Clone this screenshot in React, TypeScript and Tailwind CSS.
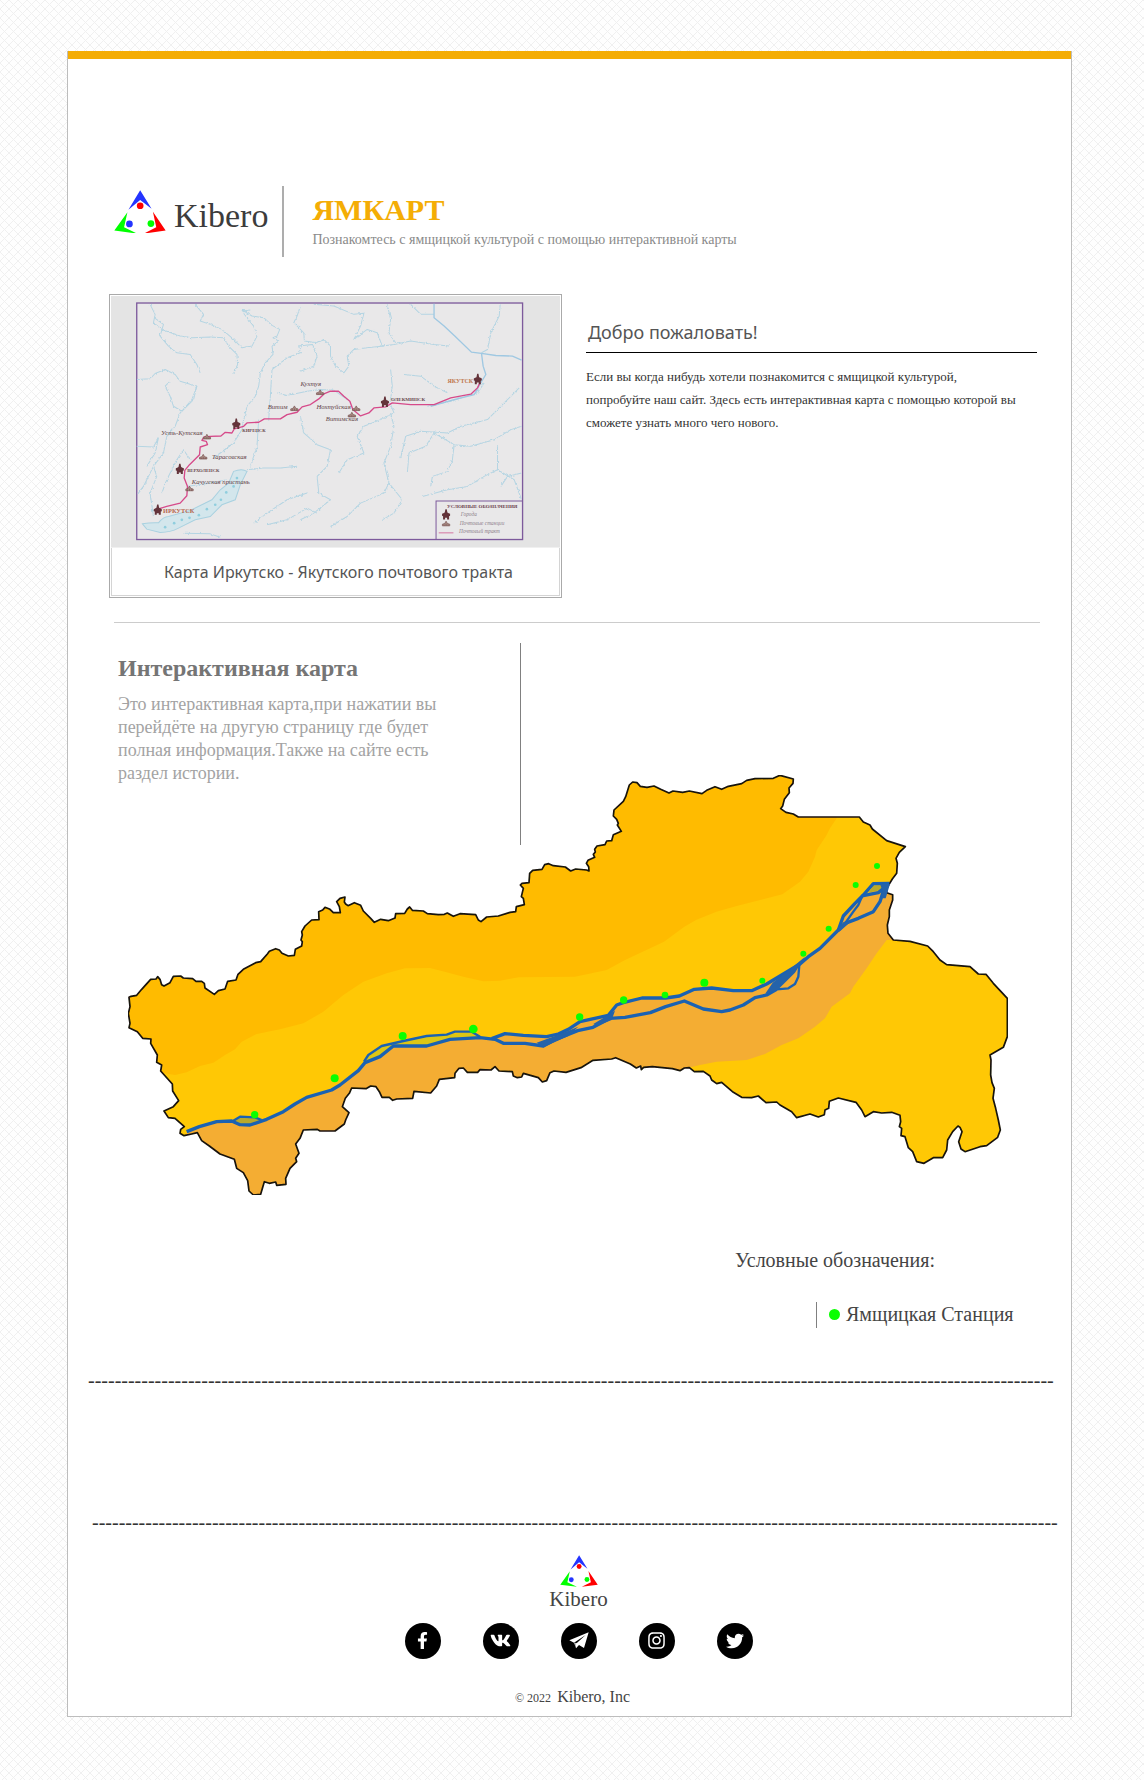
import React from "react";
import { FaFacebookF, FaVk, FaTwitter, FaInstagram } from "react-icons/fa";

const serif = "font-['Liberation_Serif',serif]";
const sans = "font-['Noto_Sans',sans-serif]";

function Logo({ className }: { className: string }) {
  return (
    <svg viewBox="222 481 155 131" className={className} aria-hidden="true">
      <path fill="#2434ff" d="M300 482 334 537 300 511 265 540Z" />
      <path fill="#f00" d="M338 546 376 602 311 611 348 592Z" />
      <path fill="#0f0" d="M262 547 223 602 291 611 252 592Z" />
      <circle cx="300" cy="528" r="10" fill="#f00" />
      <circle cx="268" cy="582" r="10" fill="#2434ff" />
      <circle cx="332" cy="581" r="10" fill="#0f0" />
    </svg>
  );
}

const rivers = [
  "M150 55 165 85 160 110 185 130 240 150 275 155 330 153 370 155 385 180 410 205 412 235 400 262",
  "M285 55 310 85 300 105 330 115 365 130 400 160 425 185 455 180 470 150 460 120 440 95 425 75 450 72",
  "M425 72 455 90 490 95 515 118 538 130 530 150 518 155 535 165 515 180 518 205 495 230 480 260 475 300 465 330 440 360 430 400 425 430",
  "M162 95 190 115 180 150 205 180 230 200 270 205 290 235 300 260",
  "M110 280 150 278 165 262 195 250 225 265 240 285 290 300 275 340 245 375 220 360 210 330 195 300 210 285",
  "M290 300 280 340 240 380 225 420 200 450 190 500 160 540 130 600 115 620",
  "M110 480 160 482 175 455 165 500 140 540",
  "M600 60 590 90 580 110 610 140 612 165 650 170 670 160 690 180 690 210 705 240 730 260 745 240 740 210 760 190 800 185 850 180",
  "M640 55 700 60 760 85 790 82 780 120 760 160 800 130 830 140 845 180 880 175 930 165 1000 175 1045 180",
  "M860 55 870 100 865 140 885 170",
  "M930 55 960 85 1000 85",
  "M1198 55 1195 90 1170 140 1160 190 1142 200",
  "M505 400 510 330 515 250 560 215 600 200 595 180 635 175 650 210 640 240 600 255",
  "M530 320 560 328 620 315 660 310 700 312 740 340",
  "M600 390 610 440 650 475 690 490 680 540 650 570 655 620 690 640 640 680 600 700",
  "M440 550 490 545 540 545 590 540",
  "M475 400 470 480 450 540",
  "M870 250 875 300 868 350 880 380 840 400 790 420 770 450 790 500 740 520 715 560",
  "M870 380 880 420 870 480 850 530 865 590 905 640 880 680 845 700",
  "M865 590 850 620 780 650 740 690 690 720",
  "M910 265 960 270 1000 300 1040 320",
  "M980 360 1050 345 1130 320 1150 290",
  "M900 515 915 450 960 435 1040 440 1080 420 1160 400 1210 350 1255 305",
  "M1000 440 975 480 925 500 920 560",
  "M1000 440 1060 475 1110 480 1180 460 1230 430 1262 420",
  "M1060 475 1055 520 1040 555 995 570 990 600",
  "M965 630 1040 610 1100 600 1150 570 1190 550 1190 480",
  "M1190 550 1240 580 1262 640",
  "M1262 560 1220 570 1200 600",
  "M460 710 500 680 560 640 620 620",
  "M500 715 560 700 620 665 650 680",
  "M160 690 150 620 170 570 160 540",
  "M270 520 250 490 230 520 200 580 185 620",
  "M340 515 400 470 425 430",
  "M260 600 330 590 380 580",
  "M250 740 330 742 360 752",
];

const towns: [number, number][] = [
  [173, 672], [239, 550], [408, 415], [853, 349], [1131, 281], [1036, 686],
];
const stations: [number, number][] = [
  [268, 607], [309, 512], [320, 452], [582, 367], [659, 319], [767, 367], [754, 386], [1036, 712],
];

function PostalRouteMap() {
  return (
    <svg viewBox="33 30 1344 753" className="block w-full" role="img" aria-label="Карта Иркутско - Якутского почтового тракта">
      <filter id="meander" x="0" y="0" width="100%" height="100%">
        <feTurbulence type="fractalNoise" baseFrequency="0.12" numOctaves="2" seed="4" />
        <feDisplacementMap in="SourceGraphic" scale="9" xChannelSelector="R" yChannelSelector="G" />
      </filter>
      <rect x="33" y="30" width="1344" height="753" fill="#e4e4e4" />
      <rect x="110" y="51" width="1155" height="708" fill="#e9e8e9" stroke="#7d5a9c" strokeWidth="4" />
      <g fill="none" stroke="#b5d5e3" strokeWidth="3" strokeLinejoin="round" filter="url(#meander)">
        {rivers.map((d) => (
          <path key={d} d={d} />
        ))}
      </g>
      <path d="M127 712Q150 708 175 709 190 690 205 690L270 672 335 640 360 610 385 590 400 555Q425 545 440 555L420 595 405 640 365 655 330 690 285 700 235 725Q210 738 180 738L140 728Z" fill="#d3e6ec" stroke="#a9d1e0" strokeWidth="3" />
      <g fill="#90cede">
        {[[195, 722], [222, 710], [245, 700], [268, 694], [296, 686], [320, 668], [345, 655], [362, 640], [378, 618], [400, 600], [410, 575]].map(([x, y]) => (
          <circle key={x} cx={x} cy={y} r="4" />
        ))}
      </g>
      <path d="M1000 53V95L1030 120 1062 150 1112 198 1142 202 1185 208 1235 210 1262 222M1142 202 1147 240 1155 265 1137 295 1120 325 1060 340 990 360" fill="none" stroke="#9fc8e2" strokeWidth="4" />
      <path
        d="M173 668 200 660 240 650 260 628 262 600 252 575 254 552 268 535 298 505 300 482 322 475 318 465 305 462 312 452 330 450 362 449 375 438 395 440 402 428 430 420 440 410 475 408 492 398 540 398 560 385 590 378 605 362 630 355 655 338 672 322 690 315 714 315 730 330 748 345 757 370 780 389 805 380 820 365 855 362 875 350 930 355 1000 355 1050 335 1110 324 1130 305 1137 290"
        fill="none" stroke="#d64a8a" strokeWidth="4" strokeLinejoin="round"
      />
      <g fill="#64333a">
        {towns.map(([x, y]) => (
          <path key={`${x}-${y}`} transform={`translate(${x} ${y})`} d="M-2-18H2L4-8 8-6 12-4V2L9 3V13H3V8H-3V13H-9V3L-12 2V-4L-8-6-4-8Z" />
        ))}
      </g>
      <g fill="#a98c85" stroke="#76504e" strokeWidth="2">
        {stations.map(([x, y]) => (
          <path key={`${x}-${y}`} transform={`translate(${x} ${y})`} d="M-11 6V1L-4-1 0-8 4-1 11 1V6ZM-6 2V6M0 0V6M6 2V6" />
        ))}
      </g>
      <g className="font-['Liberation_Serif',serif] font-bold" fontSize="17" fill="#6a4a50">
        <text x="189" y="681" fill="#b5654c" fontSize="19">ИРКУТСК</text>
        <text x="1040" y="290" fill="#c0764c" fontSize="18">ЯКУТСК</text>
        <text x="261" y="558" fontSize="14">ВЕРХОЛЕНСК</text>
        <text x="426" y="438" fontSize="14">КИРЕНСК</text>
        <text x="871" y="344" fontSize="15">ОЛЕКМИНСК</text>
        <text x="1039" y="666" fontSize="15" fill="#6a3f4c">УСЛОВНЫЕ ОБОЗНАЧЕНИЯ</text>
      </g>
      <g className="font-['Liberation_Serif',serif] italic" fontSize="20" fill="#5f4248">
        <text x="275" y="594">Качугская пристань</text>
        <text x="335" y="518">Тарасовская</text>
        <text x="183" y="446">Усть-Кутская</text>
        <text x="502" y="368">Витим</text>
        <text x="600" y="300">Кухтуя</text>
        <text x="648" y="369">Нохтуйская</text>
        <text x="676" y="404">Витимская</text>
      </g>
      <g className="font-['Liberation_Serif',serif] italic" fontSize="16" fill="#8d7f8b">
        <text x="1080" y="689">Города</text>
        <text x="1077" y="717">Почтовые станции</text>
        <text x="1075" y="739">Почтовый тракт</text>
      </g>
      <path d="M1006 759V644H1265" fill="none" stroke="#7d5a9c" strokeWidth="3" />
      <path d="M1014 739H1058" stroke="#d675a2" strokeWidth="3" />
    </svg>
  );
}

const outline =
  "M63 709 80 706 95 688 122 658 138 657 143 650 150 658 155 674 162 678 180 668 190 649 212 648 220 654 248 656 258 664 275 664 283 670 285 684 313 703 325 692 345 687 353 664 378 660 384 643 400 628 437 608 452 605 472 582 478 574 497 566 508 570 516 580 535 588 553 586 556 568 575 558 577 545 573 540 577 525 575 515 585 498 605 480 627 479 626 455 638 450 645 442 660 448 670 458 691 458 688 440 680 425 690 415 705 411 703 426 707 432 714 437 733 428 752 436 760 453 782 475 793 487 812 478 835 482 855 474 857 461 884 460 892 447 899 441 907 451 940 453 952 461 985 464 1003 463 1012 459 1030 469 1050 461 1097 464 1105 480 1113 485 1130 471 1165 468 1200 457 1217 455 1219 440 1243 434 1240 415 1234 410 1240 385 1231 375 1236 370 1257 368 1259 340 1268 331 1296 328 1304 314 1316 311 1330 317 1366 321 1382 333 1397 327 1430 330 1437 333 1436 320 1429 310 1434 301 1454 292 1450 283 1456 276 1454 268 1461 258 1485 254 1490 243 1505 242 1510 224 1534 214 1522 195 1525 190 1520 178 1510 168 1512 150 1540 124 1547 110 1558 75 1568 66 1581 68 1591 79 1611 82 1632 78 1652 88 1677 99 1689 93 1718 97 1738 93 1776 101 1790 91 1815 80 1835 88 1855 79 1895 71 1910 61 1935 56 1990 55 2010 46 2050 57 2049 70 2037 84 2038 98 2023 118 2018 138 2012 146 2028 157 2050 162 2065 171 2248 171 2260 186 2280 195 2287 207 2330 242 2386 260 2368 277 2358 295 2362 310 2360 340 2347 357 2330 385 2330 398 2348 404 2348 420 2338 450 2338 470 2332 495 2334 520 2350 540 2400 544 2453 558 2470 575 2490 600 2510 614 2580 620 2605 642 2628 643 2650 670 2692 715 2692 830 2680 862 2640 885 2643 900 2642 945 2646 968 2653 985 2649 1015 2657 1045 2665 1080 2671 1110 2663 1132 2630 1157 2610 1160 2565 1175 2553 1167 2546 1145 2556 1115 2550 1102 2544 1098 2528 1115 2513 1140 2510 1170 2498 1193 2470 1193 2442 1210 2420 1205 2408 1175 2395 1163 2385 1130 2373 1127 2375 1105 2368 1100 2372 1085 2370 1066 2345 1057 2315 1059 2290 1055 2265 1070 2255 1050 2238 1027 2185 1014 2158 1024 2156 1045 2145 1050 2143 1064 2125 1071 2100 1062 2060 1073 2045 1055 2010 1035 2000 1026 1968 1028 1945 1008 1925 1013 1895 1012 1870 997 1835 967 1820 971 1805 960 1800 948 1780 934 1753 935 1738 923 1723 924 1710 932 1687 926 1627 920 1601 922 1594 929 1592 918 1579 924 1561 912 1517 893 1505 897 1449 901 1413 923 1368 937 1332 933 1320 938 1310 962 1297 966 1285 953 1240 940 1235 951 1222 953 1210 948 1207 935 1167 933 1155 920 1143 930 1110 929 1103 937 1072 937 1060 924 1047 925 1035 940 1034 953 988 958 980 978 962 999 912 994 908 1015 860 1017 848 1021 838 1012 816 1012 808 995 798 980 782 978 768 986 725 984 718 1000 706 1015 697 1040 717 1058 707 1080 703 1092 675 1113 630 1113 622 1108 580 1110 570 1135 557 1152 567 1180 557 1195 560 1205 540 1225 527 1255 528 1273 500 1276 497 1266 478 1270 463 1265 452 1303 430 1305 417 1293 413 1262 400 1238 380 1225 373 1198 330 1182 298 1158 275 1142 262 1118 245 1122 222 1127 210 1120 212 1108 223 1100 195 1075 175 1073 162 1053 190 1040 206 1022 188 993 187 972 152 933 155 915 140 907 142 885 122 850 123 837 98 835 82 815 57 803 60 790 55 760 60 740 57 712Z";

const posts: [number, number, number][] = [
  [434, 1064, 11], [674, 955, 12], [878, 828, 12], [1090, 807, 13], [1409, 771, 11], [1541, 720, 11], [1665, 705, 10],
  [1783, 668, 12], [1957, 662, 9], [2080, 581, 9], [2156, 506, 9], [2237, 375, 9], [2301, 318, 9],
];

function RegionMap() {
  return (
    <svg viewBox="0 30 2700 1290" className="block w-full">
      <clipPath id="region">
        <path d={outline} />
      </clipPath>
      <filter id="coast" x="0" y="0" width="100%" height="100%">
        <feTurbulence type="fractalNoise" baseFrequency="0.2" numOctaves="2" seed="2" />
        <feDisplacementMap in="SourceGraphic" scale="4" xChannelSelector="R" yChannelSelector="G" />
      </filter>
      <g clipPath="url(#region)">
        <rect y="30" width="2700" height="1290" fill="#ffc805" />
        <path fill="#ffbb00" d="M0 940H165L195 945 230 937 270 918 310 908 345 885 375 868 395 845 440 822 510 808 580 790 640 755 700 705 760 665 830 640 885 625 960 624 1010 637 1060 650 1120 664 1170 662 1225 652 1395 650 1490 630 1545 600 1662 545 1723 500 1758 480 1819 455 1880 438 2017 403 2070 365 2095 335 2115 290 2120 270 2150 225 2160 205 2180 175V0H0Z" />
        <path fill="#f4ad33" d="M230 1115 320 1085 430 1090 520 1055 590 1012 675 985 750 920 810 890 850 860 950 858 1020 838 1090 833 1150 836 1190 820 1300 830 1370 808 1410 785 1495 770 1520 735 1540 728 1596 714 1667 714 1708 708 1753 688 1805 684 1870 692 1925 692 1970 672 2010 648 2070 612 2095 590 2130 565 2185 510 2200 475 2230 435 2270 400 2330 385 2360 400V540H2330L2300 580 2270 625 2230 680 2220 700 2165 740 2145 775 2115 800 2065 835 2015 855 1965 882 1910 900 1820 905 1770 915 1730 925V1320H230Z" />
        <path fill="#ddc614" d="M762 908 780 885 815 858 880 843 950 828 1010 824 1085 815 1110 830 1020 838 950 858 850 858 810 890Z" />
        <path fill="#b9a92b" d="M370 1083 390 1070 435 1072 455 1080 420 1093 390 1093Z" />
        <path fill="#b9a92b" d="M2275 398 2292 376 2320 374 2312 390Z" />
      </g>
      <path d={outline} fill="none" stroke="#17120a" strokeWidth="5" strokeLinejoin="round" filter="url(#coast)" />
      <g fill="none" stroke="#1a62b3" strokeWidth="10" strokeLinejoin="round">
        <path d="M230 1115 268 1100 320 1085 365 1083 390 1094 420 1095 470 1078 520 1055 555 1032 590 1012 665 990 690 975 745 932 765 908 810 890 850 858 950 858 1020 838 1110 833 1155 838 1180 850 1245 850 1300 858 1337 838 1403 812 1449 802 1500 775 1545 772 1621 758 1667 740 1723 723 1780 747 1835 755 1860 750 1900 735 1935 713 1970 705 2000 688" />
        <path d="M1145 836 1185 821 1240 826 1310 830 1345 822 1375 808 1410 785 1495 766 1520 735 1540 728 1596 714 1667 714 1708 708 1753 688 1805 684 1870 692 1925 692 1970 672 2010 648 2070 612 2095 590 2130 565 2185 510 2200 468 2235 430 2260 405 2290 371 2338 370" />
        <path d="M2185 510 2205 490 2245 475 2290 455 2310 425 2318 400 2322 372" />
        <path d="M2260 407 2305 398 2328 380" />
        <path strokeWidth="7" d="M762 905 775 885 815 858 880 843 950 828 1010 824 1035 815 1085 815 1110 830M370 1082 390 1070 435 1072 455 1080M2000 688 2035 685 2055 672 2065 650 2068 615M2205 490 2230 455 2245 435 2258 405" />
      </g>
      <path fill="#2463aa" d="M1280 848 1345 824 1405 800 1375 828 1300 862ZM1450 792 1490 768 1515 752 1505 780 1460 798ZM1965 702 1988 668 2040 628 2085 590 2055 638 2005 688ZM2175 520 2200 487 2222 485 2190 514ZM2310 372H2340L2327 415H2314L2318 392Z" />
      <g fill="#0aff00">
        {posts.map(([x, y, r]) => (
          <circle key={x} cx={x} cy={y} r={r} />
        ))}
      </g>
    </svg>
  );
}

function Telegram() {
  return (
    <svg viewBox="0 0 60 50" className="w-5" fill="#fff" aria-hidden="true">
      <path d="M59 1 1 25 15 32 50 9 21 35V49L30 39 45 48Z" />
      <path d="M15 32 21 49 25 33Z" opacity=".75" />
    </svg>
  );
}

function Social({ label, children }: { label: string; children: React.ReactNode }) {
  return (
    <a href="#" aria-label={label} className="flex size-9 items-center justify-center rounded-full bg-black text-white">
      {children}
    </a>
  );
}

function Dashes() {
  return (
    <div aria-hidden="true" className="overflow-hidden text-xl leading-6 whitespace-nowrap text-[#333]">
      {"-".repeat(145)}
    </div>
  );
}

export default function App() {
  return (
    <div className={`${serif} min-h-screen bg-[#fefefe] bg-[linear-gradient(45deg,transparent_46%,#f0f0f0_46%_54%,transparent_54%),linear-gradient(-45deg,transparent_46%,#f0f0f0_46%_54%,transparent_54%)] bg-size-[9px_9px] pt-[51px] pr-[72px] pb-[63px] pl-[67px] text-[#444]`}>
      <div className="border border-t-0 border-[#bdbdbd] bg-white">
        <div className="h-2 bg-[#f4ad05]" />

        <header className="flex items-center pt-[127px] pl-[46px]">
          <a href="#" className="flex items-center gap-2 pb-3 text-[34px] leading-10 text-[#3c3c3c]">
            <Logo className="mb-2 w-[52px]" />
            Kibero
          </a>
          <div className="ml-3.5 h-[71px] w-0.5 bg-[#adadad]" />
          <div className="ml-7 pt-1">
            <h1 className="text-3xl leading-8 font-bold text-[#f4ad05]">ЯМКАРТ</h1>
            <p className="text-sm leading-7 text-[#8a8a8a]">Познакомтесь с ямщицкой культурой с помощью интерактивной карты</p>
          </div>
        </header>

        <section className="mt-[37px] flex gap-6 pr-[34px] pl-[41px]">
          <figure className="w-[453px] shrink-0 border border-[#aaa] p-px">
            <PostalRouteMap />
            <figcaption className={`${sans} border border-t-0 border-[#d4d4d4] pt-3 pb-[11px] pl-1.5 text-center text-base leading-6 text-[#555]`}>
              Карта Иркутско - Якутского почтового тракта
            </figcaption>
          </figure>
          <div className="flex-1 pt-[26px]">
            <h2 className={`${sans} border-b border-black pb-2 pl-0.5 text-lg leading-6 text-[#555]`}>Добро пожаловать!</h2>
            <p className="pt-3 pr-5 text-[13px] leading-[23px] text-[#333]">
              Если вы когда нибудь хотели познакомится с ямщицкой культурой, попробуйте наш сайт. Здесь есть интерактивная карта с помощью которой вы сможете узнать много чего нового.
            </p>
          </div>
        </section>

        <hr className="mt-6 mr-[31px] ml-[46px] border-[#ccc]" />

        <section className="mt-5 grid pr-[61px] pl-[42px]">
          <div className="col-start-1 row-start-1 h-[202px] w-[411px] border-r border-[#808080] pt-[9px] pl-2">
            <h2 className="text-2xl leading-8 font-bold text-[#757575]">Интерактивная карта</h2>
            <p className="w-[330px] pt-[9px] text-lg leading-[23px] text-[#a3a3a3]">
              Это интерактивная карта,при нажатии вы перейдёте на другую страницу где будет полная информация.Также на сайте есть раздел истории.
            </p>
          </div>
          <a href="#" aria-label="Интерактивная карта" className="col-start-1 row-start-1 mt-[127px]">
            <RegionMap />
          </a>
        </section>

        <section className="mt-12 flex flex-col items-end pr-[57px]">
          <div className="w-[279px]">
            <h2 className="text-xl leading-6">Условные обозначения:</h2>
            <div className="mt-[30px] ml-[81px] flex items-center border-l border-[#808080] pl-3 text-xl leading-6">
              <span className="mr-1.5 size-[11px] shrink-0 rounded-full bg-[#0aff00]" />
              <span className="pb-0.5 whitespace-nowrap">Ямщицкая Станция</span>
            </div>
          </div>
        </section>

        <div className="mt-10 pl-5">
          <Dashes />
        </div>
        <div className="mt-[118px] pl-6">
          <Dashes />
        </div>

        <footer className="flex flex-col items-center pt-[21px] pb-[7px] pl-[18px]">
          <Logo className="w-[38px]" />
          <span className="text-[21px] leading-6">Kibero</span>
          <nav className="mt-3 flex gap-[42px]">
            <Social label="Facebook"><FaFacebookF size={17} /></Social>
            <Social label="VK"><FaVk size={21} /></Social>
            <Social label="Telegram"><Telegram /></Social>
            <Social label="Instagram"><FaInstagram size={19} /></Social>
            <Social label="Twitter"><FaTwitter size={18} /></Social>
          </nav>
          <p className="mt-[26px] mr-3 text-base leading-6">
            <span className="mr-1.5 text-xs">© 2022</span>Kibero, Inc
          </p>
        </footer>
      </div>
    </div>
  );
}
